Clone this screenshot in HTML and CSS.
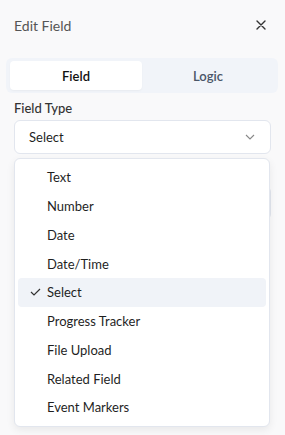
FILE: index.html
```html
<!DOCTYPE html>
<html lang="en">
  <head>
    <meta charset="UTF-8" />
    <meta name="viewport" content="width=device-width, initial-scale=1.0" />
    <title>Edit Field</title>
    <link rel="stylesheet" href="styles.css">
  </head>
  <body>
    <div class="panel">
      <div class="panel-header">
        <span class="panel-title">Edit Field</span>
        <button class="close-btn" aria-label="Close">
          <svg width="10" height="10" viewBox="0 0 10 10">
            <path d="M1 1 L9 9 M9 1 L1 9" stroke="#333" stroke-width="1.4" stroke-linecap="round" />
          </svg>
        </button>
      </div>

      <div class="tabs">
        <div class="tab active">Field</div>
        <div class="tab">Logic</div>
      </div>

      <div class="field-group">
        <label class="field-label">Field Type</label>
        <div class="select-box">
          <span>Select</span>
          <svg class="chevron" width="10" height="6" viewBox="0 0 10 6">
            <path d="M1 1 L5 5 L9 1" fill="none" stroke="#888" stroke-width="1.1" />
          </svg>
        </div>
        <!-- next field sits under the open menu -->
        <div class="select-box hidden-under"></div>

        <ul class="dropdown">
          <li>Text</li>
          <li>Number</li>
          <li>Date</li>
          <li>Date/Time</li>
          <li class="selected">
            <svg class="check" width="11" height="8" viewBox="0 0 11 8">
              <path d="M1 4 L4 7 L10 1" fill="none" stroke="#333" stroke-width="1.2" />
            </svg>
            Select
          </li>
          <li>Progress Tracker</li>
          <li>File Upload</li>
          <li>Related Field</li>
          <li>Event Markers</li>
        </ul>
      </div>
    </div>
  </body>
</html>
```

FILE: styles.css
```css
:root {
  --bg: #f9f9fa;
  --surface: #ffffff;
  --border: #e2e6ee;
  --tab-bg: #f1f4f9;
  --text: #1f1f1f;
  --muted: #555;
  --slate: #4a5568;
  --hover: #f0f3f8;
}
html,
body {
  margin: 0;
  padding: 0;
}
body {
  background-color: var(--bg);
  font-family: "Lato", "Noto Sans", sans-serif;
  font-size: 13px;
  color: var(--text);
  -webkit-font-smoothing: antialiased;
}
.panel {
  padding: 0 14px;
  height: 100vh;
  min-height: 435px;
  box-sizing: border-box;
}
.panel-header {
  height: 50px;
  display: flex;
  align-items: center;
  justify-content: space-between;
}
.panel-title {
  font-size: 14px;
  color: var(--muted);
}
.close-btn {
  border: none;
  background: none;
  padding: 0;
  margin-right: 5px;
  display: flex;
  cursor: pointer;
}
.tabs {
  margin: 8px -7px 0 -8px;
  height: 35px;
  padding: 3px 4px;
  box-sizing: border-box;
  display: flex;
  background-color: var(--tab-bg);
  border-radius: 6px;
}
.tab {
  flex: 1;
  display: flex;
  align-items: center;
  justify-content: center;
  font-weight: 600;
  color: var(--slate);
  border-radius: 4px;
}
.tab.active {
  background-color: var(--surface);
  color: #111;
  box-shadow: 0 1px 2px rgba(0, 0, 0, 0.04);
}
.field-group {
  position: relative;
}
.field-label {
  display: block;
  margin-top: 6px;
  height: 21px;
  line-height: 18px;
  font-weight: 500;
  color: #333;
}
.select-box {
  height: 34px;
  box-sizing: border-box;
  border: 1px solid var(--border);
  border-radius: 6px;
  background-color: var(--surface);
  display: flex;
  align-items: center;
  justify-content: space-between;
  padding: 0 14px;
}
.select-box.hidden-under {
  margin-top: 32px;
}
.chevron {
  margin-right: 1px;
}
.dropdown {
  position: absolute;
  top: 59px;
  left: 0;
  right: 1px;
  margin: 0;
  padding: 4px 3px;
  list-style: none;
  background-color: var(--surface);
  border: 1px solid var(--border);
  border-radius: 6px;
  box-shadow: 0 3px 8px rgba(0, 0, 0, 0.07);
}
.dropdown li {
  position: relative;
  height: 28.75px;
  display: flex;
  align-items: center;
  padding-left: 29px;
  border-radius: 4px;
}
.dropdown li.selected {
  background-color: var(--hover);
}
.check {
  position: absolute;
  left: 12px;
}
```
